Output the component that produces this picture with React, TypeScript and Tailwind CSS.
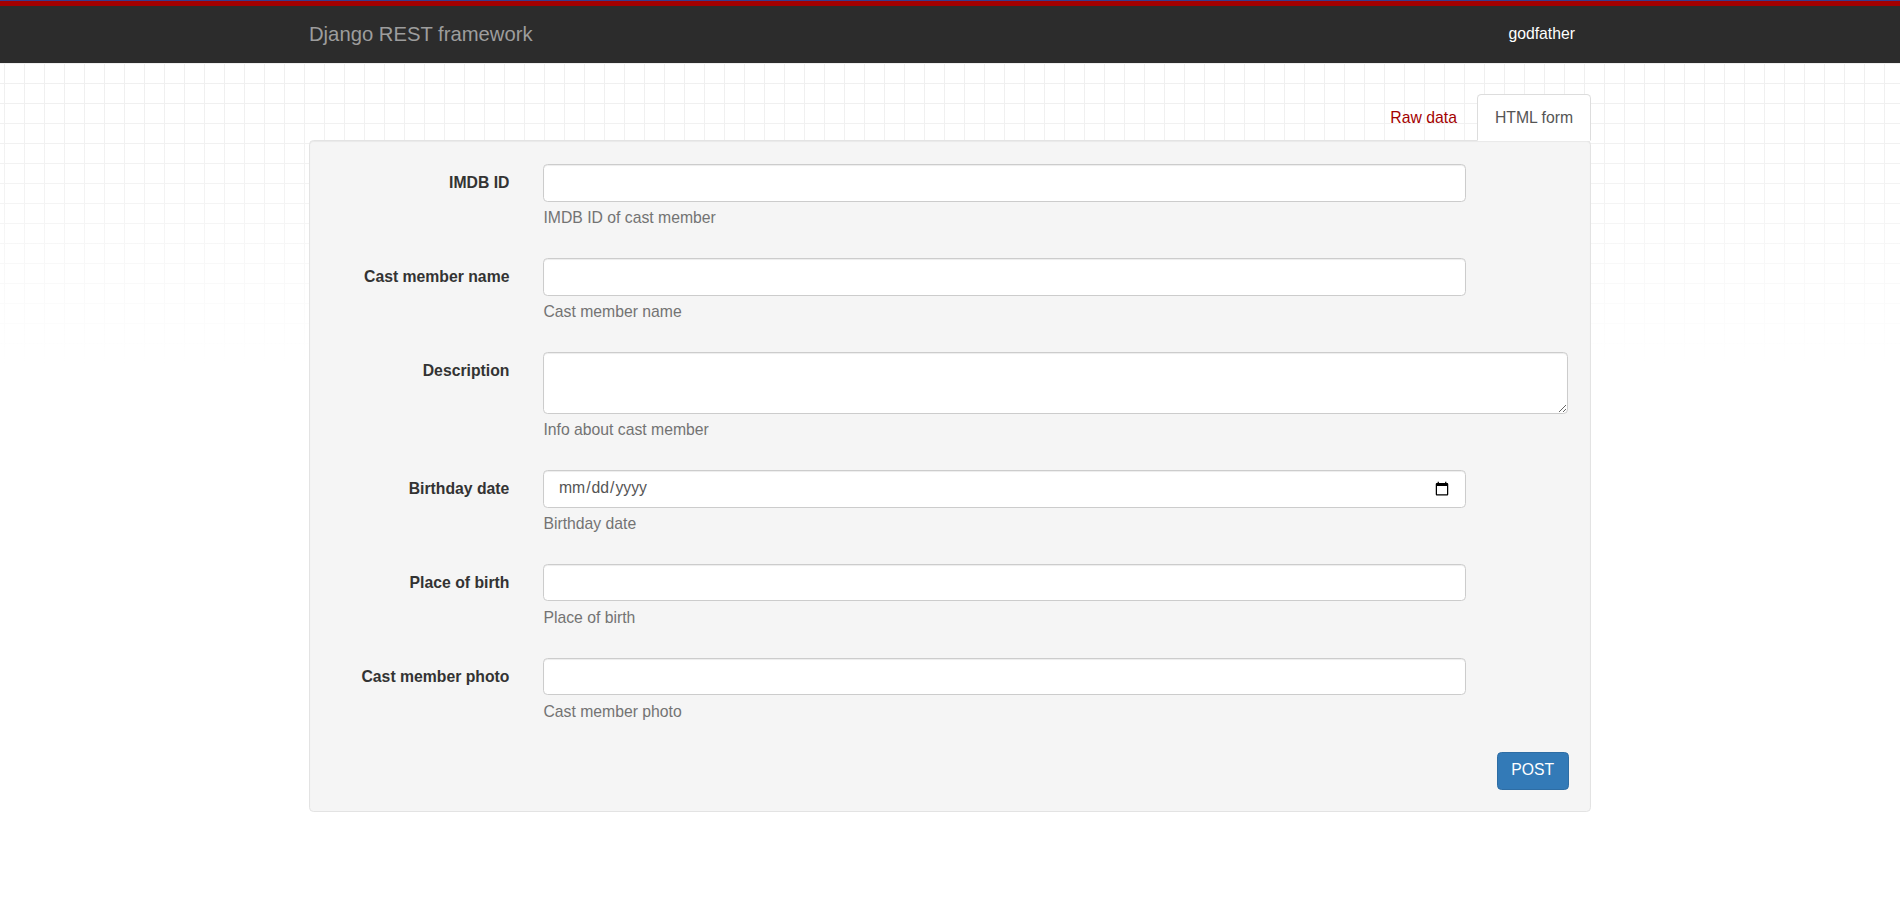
import React from 'react';

type Field = {
  id: string;
  label: string;
  help: string;
  kind?: 'text' | 'textarea' | 'date';
};

const fields: Field[] = [
  { id: 'imdb_id', label: 'IMDB ID', help: 'IMDB ID of cast member' },
  { id: 'name', label: 'Cast member name', help: 'Cast member name' },
  { id: 'description', label: 'Description', help: 'Info about cast member', kind: 'textarea' },
  { id: 'birthday', label: 'Birthday date', help: 'Birthday date', kind: 'date' },
  { id: 'place_of_birth', label: 'Place of birth', help: 'Place of birth' },
  { id: 'photo', label: 'Cast member photo', help: 'Cast member photo' },
];

const inputClass =
  'block bg-white border border-[#cccccc] rounded-[4.5px] px-[13.5px] py-[6.75px] text-[15.75px] leading-[22.5px] text-[#555555] shadow-[inset_0_1px_1px_rgba(0,0,0,0.075)] outline-none';

const Navbar: React.FC = () => (
  <div className="border-t border-[#383c8c]">
    <div className="bg-[#2c2c2c] border-t-[5.5px] border-[#a30000] h-[62px]">
      <div className="mx-auto w-[1316px] px-[17px] flex justify-between items-start">
        <a className="block pt-[16.5px] text-[20.25px] leading-[22.5px] text-[#9d9d9d]">
          Django REST framework
        </a>
        <a className="block pt-[16.9px] pr-[16px] text-[15.75px] leading-[22.5px] text-white">
          godfather
        </a>
      </div>
    </div>
  </div>
);

const FormRow: React.FC<{ field: Field }> = ({ field }) => {
  let control: React.ReactNode;
  if (field.kind === 'textarea') {
    control = <textarea id={field.id} rows={2} className={`${inputClass} w-full h-[61.75px] resize-y`} />;
  } else if (field.kind === 'date') {
    control = <input id={field.id} type="date" className={`${inputClass} w-[923px] h-[37.75px]`} />;
  } else {
    control = <input id={field.id} type="text" className={`${inputClass} w-[923px] h-[37.75px]`} />;
  }

  return (
    <div className="flex gap-[34px] mb-[16.9px]">
      <label
        htmlFor={field.id}
        className="w-[178px] shrink-0 text-right font-bold pt-[7.9px] text-[15.75px] leading-[22.5px] text-[#333333]"
      >
        {field.label}
      </label>
      <div className="w-[1025px]">
        {control}
        <span className="block mt-[5.6px] mb-[11.25px] text-[15.75px] leading-[22.5px] text-[#737373]">
          {field.help}
        </span>
      </div>
    </div>
  );
};

const App: React.FC = () => {
  return (
    <div className="w-[1900px] min-h-screen bg-white font-['Liberation_Sans',Arial,sans-serif] text-[15.75px] text-[#333333]">
      <Navbar />

      <div className="min-h-[834px] bg-[linear-gradient(to_bottom,rgba(255,255,255,0)_0px,rgba(255,255,255,0.25)_130px,#ffffff_300px),linear-gradient(to_right,#efefef_1px,transparent_1px),linear-gradient(to_bottom,#efefef_1px,transparent_1px)] bg-[length:100%_100%,20px_20px,20px_20px] bg-[position:0_0,4px_0,0_0]">
        <div className="mx-auto w-[1316px] px-[17px] pt-[31.3px]">
          {/* tabs */}
          <ul className="flex justify-end">
            <li className="mr-[2.25px] -mb-px">
              <a className="block px-[16.9px] py-[11.25px] border border-transparent leading-[22.5px] text-[#a30000] cursor-pointer">
                Raw data
              </a>
            </li>
            <li className="-mb-px">
              <a className="block px-[16.9px] py-[11.25px] border border-[#dddddd] border-b-transparent rounded-t-[4.5px] bg-white leading-[22.5px] text-[#555555]">
                HTML form
              </a>
            </li>
          </ul>

          {/* well */}
          <div className="bg-[#f5f5f5] border border-[#e3e3e3] rounded-[4.5px] px-[21.4px] pt-[22.5px] pb-[21.4px] shadow-[inset_0_1px_1px_rgba(0,0,0,0.05)]">
            <form onSubmit={(e) => e.preventDefault()}>
              {fields.map((f) => (
                <FormRow key={f.id} field={f} />
              ))}
              <div className="flex justify-end">
                <button
                  type="submit"
                  title="Make a POST request on the Cast Member List resource"
                  className="bg-[#337ab7] border border-[#2e6da4] rounded-[4.5px] px-[13.5px] py-[6.75px] text-[15.75px] leading-[22.5px] text-white"
                >
                  POST
                </button>
              </div>
            </form>
          </div>
        </div>
      </div>
    </div>
  );
};

export default App;
